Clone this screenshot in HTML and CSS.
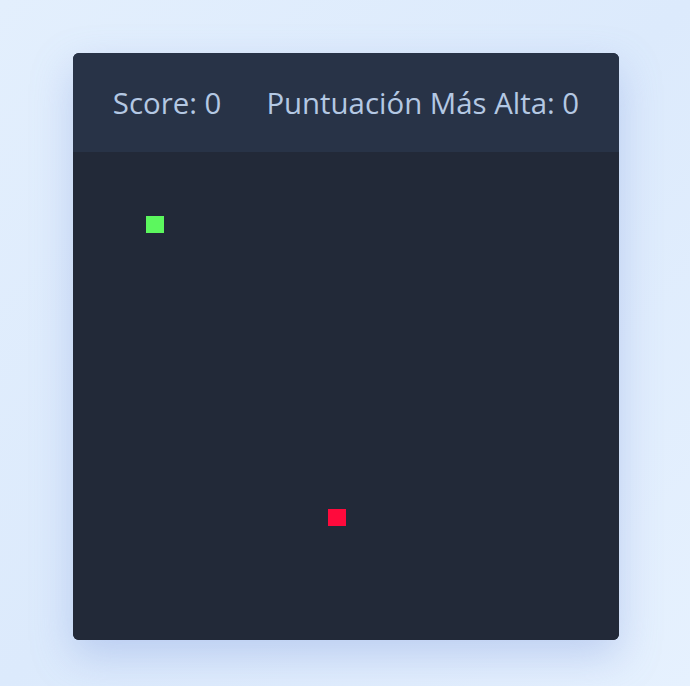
FILE: index.html
```html
<!DOCTYPE html>
<html lang="es">
<head>
<meta charset="utf-8">
<link rel="stylesheet" href="styles.css">
</head>
<body>
<div class="card">
  <div class="header">
    <span class="score">Score: 0</span>
    <span class="score">Puntuación Más Alta: 0</span>
  </div>
  <div class="board">
    <div class="cell snake" style="left:73px;top:64px"></div>
    <div class="cell food" style="left:255px;top:357px"></div>
  </div>
</div>
</body>
</html>
```
FILE: styles.css
```css
html, body { margin: 0; height: 100%; }
body {
  background: linear-gradient(135deg, #e3effd 0%, #dceafc 50%, #e6f1fe 100%);
  font-family: "Open Sans", "Noto Sans", sans-serif;
  display: flex;
  justify-content: flex-start;
  align-items: flex-start;
  padding: 53px 0 0 73px;
  box-sizing: border-box;
}
.card {
  width: 546px;
  border-radius: 6px;
  overflow: hidden;
  background: #222938;
  box-shadow: 0 16px 40px rgba(120, 150, 220, 0.35);
}
.header {
  height: 99px;
  background: #283347;
  display: flex;
  justify-content: center;
  align-items: center;
  gap: 45px;
  color: #b4c8e3;
  font-size: 29.4px;
}
.board {
  position: relative;
  height: 488px;
  background: #222938;
}
.cell { position: absolute; width: 18px; height: 17px; }
.snake { background: #5cf75e; }
.food { background: #ff0a3c; }
```
